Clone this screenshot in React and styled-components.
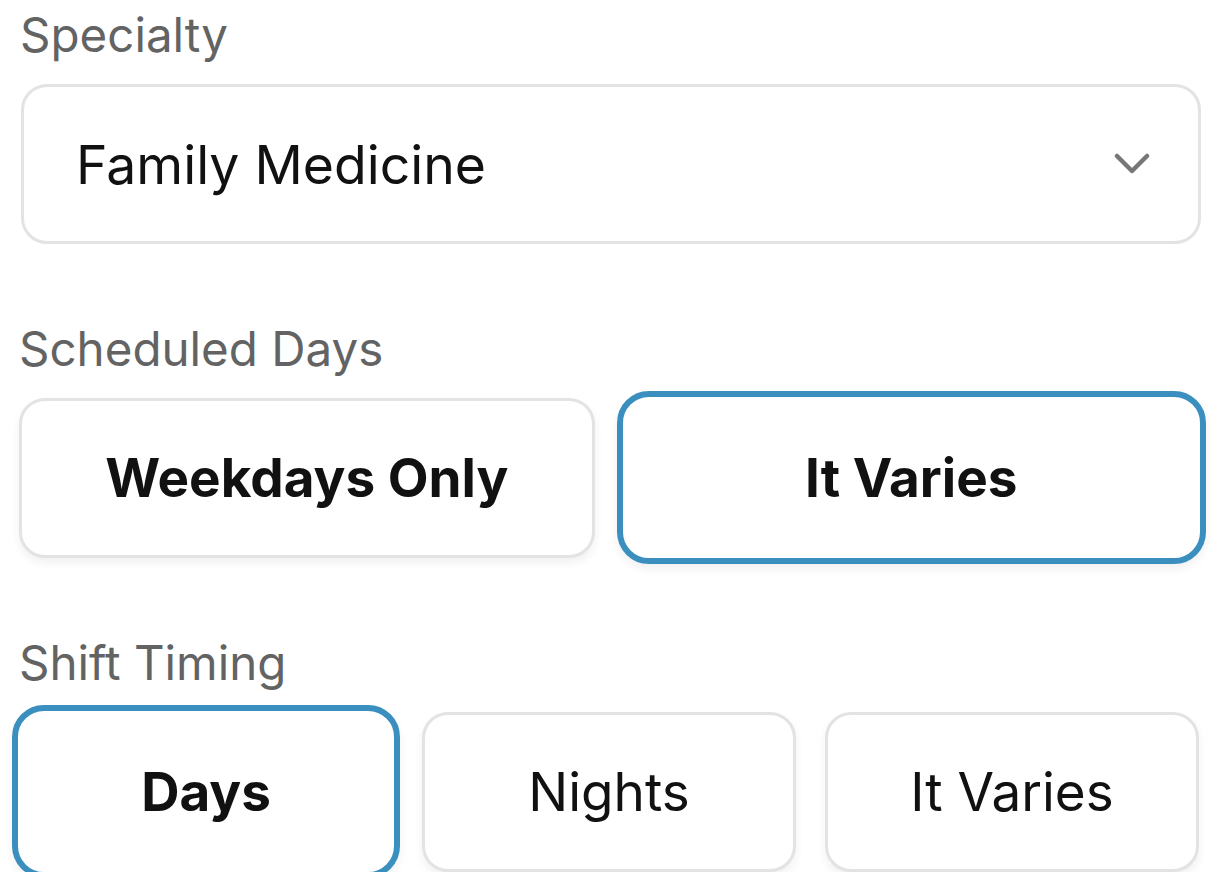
import React, { useState } from "react";
import styled, { createGlobalStyle } from "styled-components";

const Global = createGlobalStyle`
  html, body { margin: 0; padding: 0; background: #ffffff; }
  body { font-family: Inter, "Noto Sans", "Liberation Sans", sans-serif; }
  * { box-sizing: border-box; }
`;

const Page = styled.div`
  width: 1217px;
  padding: 6px 18px 0 19px;
  display: flex;
  flex-direction: column;
  gap: 76px;
`;

const Field = styled.section`
  display: flex;
  flex-direction: column;
  gap: 20px;
`;

const Label = styled.div`
  font-size: 47.5px;
  line-height: 58px;
  color: #636363;
  font-weight: 400;
  padding-left: ${(p) => p.$indent || 0}px;
`;

const Select = styled.div`
  margin-left: 2px;
  margin-right: -2px;
  height: 160px;
  border: 3px solid #e3e3e3;
  border-radius: 26px;
  background: #fff;
  display: flex;
  align-items: center;
  justify-content: space-between;
  padding: 0 48px 0 52px;
  font-size: 53.5px;
  color: #111;
`;

const Chevron = styled.svg`
  width: 36px;
  height: 22px;
  display: block;
`;

const OptionGrid = styled.div`
  display: grid;
  grid-template-columns: repeat(${(p) => p.$cols}, 1fr);
  column-gap: 29px;
`;

const Option = styled.button`
  height: ${(p) => (p.$selected ? 173 : 160)}px;
  margin: ${(p) => (p.$selected ? "-7px" : "0")};
  border: ${(p) => (p.$selected ? "6px solid #3a8fbe" : "3px solid #e3e3e3")};
  border-radius: ${(p) => (p.$selected ? 32 : 26)}px;
  background: #fff;
  box-shadow: 0 5px 10px rgba(0, 0, 0, 0.06);
  font-family: inherit;
  font-size: 53px;
  font-weight: ${(p) => (p.$bold ? 700 : 400)};
  color: #111;
  display: flex;
  align-items: center;
  justify-content: center;
  cursor: pointer;
  padding: 0;
`;

function OptionGroup({ options, value, onChange, boldAll }) {
  return (
    <OptionGrid $cols={options.length}>
      {options.map((o) => (
        <Option
          key={o}
          $selected={o === value}
          $bold={boldAll || o === value}
          onClick={() => onChange(o)}
        >
          {o}
        </Option>
      ))}
    </OptionGrid>
  );
}

export default function App() {
  const [days, setDays] = useState("It Varies");
  const [timing, setTiming] = useState("Days");
  return (
    <>
      <Global />
      <Page>
        <Field>
          <Label $indent={1}>Specialty</Label>
          <Select>
            <span>Family Medicine</span>
            <Chevron viewBox="0 0 36 22" fill="none">
              <polyline
                points="3,3 18,18 33,3"
                stroke="#777"
                strokeWidth="4.5"
                strokeLinecap="round"
                strokeLinejoin="round"
              />
            </Chevron>
          </Select>
        </Field>
        <Field>
          <Label>Scheduled Days</Label>
          <OptionGroup
            options={["Weekdays Only", "It Varies"]}
            value={days}
            onChange={setDays}
            boldAll
          />
        </Field>
        <Field>
          <Label>Shift Timing</Label>
          <OptionGroup
            options={["Days", "Nights", "It Varies"]}
            value={timing}
            onChange={setTiming}
          />
        </Field>
      </Page>
    </>
  );
}
